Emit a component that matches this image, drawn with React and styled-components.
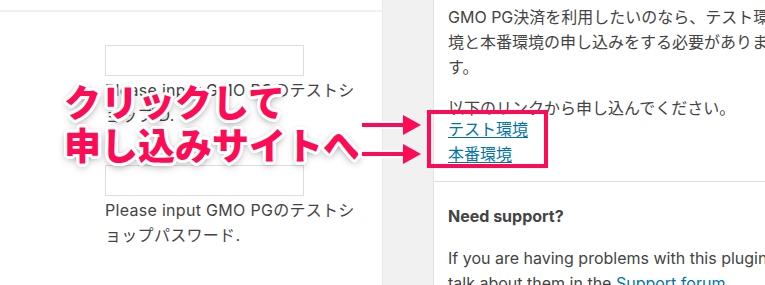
import React from 'react';
import styled, { createGlobalStyle } from 'styled-components';

const pink = '#ff0a55';

const GlobalStyle = createGlobalStyle`
  html, body {
    margin: 0;
    padding: 0;
    overflow: hidden;
    background: #fff;
  }
  body {
    font-family: Inter, "Noto Sans CJK JP", sans-serif;
    font-size: 16px;
    color: #444;
  }
`;

const Page = styled.div`
  position: relative;
  display: flex;
  width: 765px;
  height: 285px;
  overflow: hidden;
`;

const FormPanel = styled.div`
  width: 382px;
  flex-shrink: 0;
  padding-top: 10px;
  background: #fff;
`;

const FormTable = styled.div`
  border-top: 2px solid #f0f0f0;
  padding-left: 105px;
`;

const Field = styled.div`
  padding-top: ${(p) => p.$gap}px;
`;

const TextInput = styled.input`
  display: block;
  box-sizing: border-box;
  width: 199px;
  height: 31px;
  margin: 0;
  border: 1px solid #ddd;
  background: #fff;
  outline: none;
`;

const Description = styled.p`
  width: 252px;
  margin: 2px 0 0;
  line-height: 25px;
  letter-spacing: 0.3px;
  color: #444;
`;

const Gutter = styled.div`
  width: 50px;
  flex-shrink: 0;
  background: #f1f1f1;
  border-left: 1px solid #e8e8e8;
  border-right: 1px solid #e2e2e2;
`;

const Sidebar = styled.div`
  flex: 1;
  min-width: 0;
  background: #fff;
`;

const SideSection = styled.div`
  width: 326px;
  padding: ${(p) => p.$pad};
  margin-right: -40px;
`;

const SideText = styled.p`
  margin: 0 0 ${(p) => p.$after || 0}px;
  line-height: 25px;
`;

const SideHeading = styled.h3`
  margin: 0 0 17px;
  font-size: 16px;
  font-weight: 700;
  line-height: 25px;
  color: #444;
`;

const LinkList = styled.div`
  display: flex;
  flex-direction: column;
  align-items: flex-start;
  margin: -4px 0 14px;
`;

const Link = styled.a`
  color: #0073aa;
  text-decoration: underline;
  text-underline-offset: 2px;
  line-height: 25px;
`;

const SideDivider = styled.div`
  border-top: 1px solid #ddd;
  margin-left: -14px;
  width: 400px;
`;

/* annotation layer drawn over the screenshot */
const Callout = styled.div`
  position: absolute;
  left: 64px;
  top: 80px;
  font-family: "Noto Sans CJK JP", sans-serif;
  font-weight: 900;
  font-size: 37px;
  line-height: 43px;
  color: ${pink};
  white-space: nowrap;
  text-shadow:
    3px 0 0 #fff, -3px 0 0 #fff, 0 3px 0 #fff, 0 -3px 0 #fff,
    2px 2px 0 #fff, -2px 2px 0 #fff, 2px -2px 0 #fff, -2px -2px 0 #fff,
    3px 1px 0 #fff, -3px 1px 0 #fff, 3px -1px 0 #fff, -3px -1px 0 #fff,
    1px 3px 0 #fff, -1px 3px 0 #fff, 1px -3px 0 #fff, -1px -3px 0 #fff,
    0 3px 9px rgba(0, 0, 0, 0.45), 0 0 6px rgba(0, 0, 0, 0.25);
`;

const Arrows = styled.svg`
  position: absolute;
  left: 358px;
  top: 112px;
`;

const Frame = styled.div`
  position: absolute;
  left: 427px;
  top: 110px;
  width: 121px;
  height: 58px;
  box-sizing: border-box;
  border: 4px solid ${pink};
`;

function Arrow({ y }) {
  return (
    <g>
      <path d={`M4 ${y} H48`} stroke="#fff" strokeWidth="8" strokeLinecap="round" />
      <path d={`M4 ${y} H48`} stroke={pink} strokeWidth="4" />
      <path d={`M45 ${y - 10} L63 ${y} L45 ${y + 10} Z`} fill={pink} />
    </g>
  );
}

export default function App() {
  return (
    <>
      <GlobalStyle />
      <Page>
        <FormPanel>
          <FormTable>
            <Field $gap={33}>
              <TextInput type="text" />
              <Description>Please input GMO PGのテストショップID.</Description>
            </Field>
            <Field $gap={37}>
              <TextInput type="password" />
              <Description>Please input GMO PGのテストショップパスワード.</Description>
            </Field>
          </FormTable>
        </FormPanel>
        <Gutter />
        <Sidebar>
          <SideSection $pad="5px 0 0 14px">
            <SideText $after={16}>
              GMO PG決済を利用したいのなら、テスト環境と本番環境の申し込みをする必要があります。
            </SideText>
            <SideText>以下のリンクから申し込んでください。</SideText>
            <LinkList>
              <Link href="#">テスト環境</Link>
              <Link href="#">本番環境</Link>
            </LinkList>
            <SideDivider />
          </SideSection>
          <SideSection $pad="22px 0 0 14px">
            <SideHeading>Need support?</SideHeading>
            <SideText>
              If you are having problems with this plugin, talk about them in the{' '}
              <Link href="#">Support forum</Link>.
            </SideText>
          </SideSection>
        </Sidebar>

        <Callout>
          クリックして
          <br />
          申し込みサイトへ
        </Callout>
        <Arrows width="70" height="60" viewBox="0 0 70 60">
          <Arrow y={13} />
          <Arrow y={42} />
        </Arrows>
        <Frame />
      </Page>
    </>
  );
}
